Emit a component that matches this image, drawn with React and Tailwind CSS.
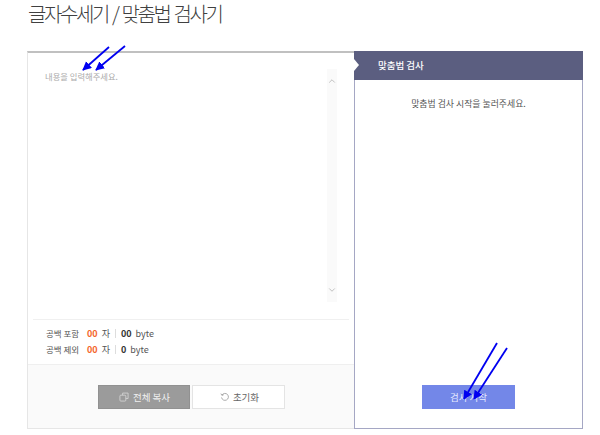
import { ChevronUp, ChevronDown } from 'lucide-react';

const Arrow = ({ x1, y1, x2, y2, id }) => (
  <line x1={x1} y1={y1} x2={x2} y2={y2} stroke="#0000f0" strokeWidth="1.8" markerEnd={`url(#${id})`} />
);

const StatRow = ({ label, bytes }) => (
  <div className="flex items-center">
    <span className="w-[41px]">{label}</span>
    <span className="font-bold text-[9px] text-[#f4662c]">00</span>
    <span className="ml-[4px] text-[9px]">자</span>
    <span className="mx-[5px] h-[9px] border-l border-l-[#ddd]" />
    <span className="font-bold text-[9px] text-[#333]">{bytes}</span>
    <span className="ml-[4px] text-[9px]">byte</span>
  </div>
);

export default function App() {
  return (
    <div className="relative w-[600px] h-[435px] overflow-hidden bg-white pl-[27px] font-['Noto_Sans_CJK_KR',sans-serif]">
      <h1 className="h-[51px] pt-[2px] pl-px text-[20px] leading-[24px] font-light tracking-[-2.4px] [word-spacing:2px] text-[#404040] whitespace-nowrap">
        글자수세기 / 맞춤법 검사기
      </h1>

      <div className="flex w-[556px] h-[378px]">
        {/* left panel */}
        <div className="flex flex-col w-[327px] h-[378px] border-t-2 border-t-[#c0c0c0] border-l border-l-[#e6e6e6] border-b border-b-[#e6e6e6]">
          <div className="flex justify-between h-[266px] pt-[16px] pl-[17px] pr-[17px]">
            <p className="pt-px text-[8.3px] leading-[13px] text-[#aaa]">내용을 입력해주세요.</p>
            <div className="flex flex-col justify-between items-center w-[10px] h-[233px] py-[7px] bg-[#fafafa] text-[#b5b5b5]">
              <ChevronUp size={10} strokeWidth={2} />
              <ChevronDown size={10} strokeWidth={2} />
            </div>
          </div>

          <div className="flex flex-col gap-[3px] h-[45px] mx-[5px] pt-[7px] pl-[13px] border-t border-t-[#f0f0f0] text-[8.5px] leading-[13px] text-[#555]">
            <StatRow label="공백 포함" bytes="00" />
            <StatRow label="공백 제외" bytes="0" />
          </div>

          <div className="flex flex-1 justify-center gap-[2px] pt-[20px] bg-[#fafafa] border-t border-t-[#efefef]">
            <button className="flex items-center justify-center gap-[4px] w-[92px] h-[24px] pl-[2px] bg-[#9b9b9b] border border-[#919191] text-[9.5px] text-[#f0f0f0]">
              <svg width="10" height="10" viewBox="0 0 11 11" fill="none" stroke="#d8d8d8" strokeWidth="0.9">
                <rect x="1" y="3.5" width="6.5" height="6.5" rx="1" />
                <path d="M4 3.5V1.2h6v6H7.5" />
              </svg>
              전체 복사
            </button>
            <button className="flex items-center justify-center gap-[3px] w-[93px] h-[24px] pl-[3px] bg-white border border-[#e4e4e4] text-[9.5px] text-[#666]">
              <svg width="10" height="10" viewBox="0 0 11 11" fill="none" stroke="#999" strokeWidth="0.9">
                <path d="M2.2 3.4A3.8 3.8 0 1 1 1.7 6" />
                <path d="M1 1.8l1.1 1.9 1.9-.6" />
              </svg>
              초기화
            </button>
          </div>
        </div>

        {/* right panel */}
        <div className="relative flex flex-col w-[229px] h-[378px] border-x border-b border-[#a5a7c4]">
          <div className="flex items-center h-[29px] pl-[24px] -mx-px bg-[#5b5e80] text-[9.5px] font-medium text-white">
            맞춤법 검사
          </div>
          <p className="pt-[17px] text-center text-[8.9px] leading-[14px] text-[#555]">맞춤법 검사 시작을 눌러주세요.</p>
          <div className="absolute left-[-1px] top-[8px] w-0 h-0 border-y-[6px] border-y-transparent border-l-[5px] border-l-white" />
          <button className="absolute left-[67px] top-[334px] w-[93px] h-[24px] bg-[#7387e8] text-[9.5px] text-[#e8ecff]">
            검사 시작
          </button>
        </div>
      </div>

      {/* blue annotation arrows */}
      <svg className="absolute left-0 top-0 pointer-events-none" width="600" height="435">
        <defs>
          <marker id="head" markerWidth="6" markerHeight="6" refX="4.5" refY="2.5" orient="auto">
            <path d="M0 0L5 2.5L0 5z" fill="#0000f0" />
          </marker>
        </defs>
        <Arrow id="head" x1="109" y1="47" x2="83" y2="70" />
        <Arrow id="head" x1="125" y1="46" x2="96" y2="70" />
        <Arrow id="head" x1="497" y1="343" x2="464" y2="399" />
        <Arrow id="head" x1="507" y1="348" x2="474" y2="399" />
      </svg>
    </div>
  );
}
